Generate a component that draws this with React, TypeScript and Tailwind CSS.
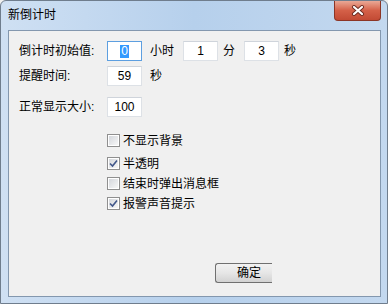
const font = "font-['Liberation_Sans','Noto_Sans_CJK_SC',sans-serif]";

const TextBox = ({ value, focused }: { value: string; focused?: boolean }) => (
  <div
    className={`w-[35px] h-[20px] bg-white flex items-center justify-center text-[12px] text-black border ${
      focused ? "border-[#5d9fe0]" : "border-[#dde1e6] border-t-[#cfd4db]"
    }`}
  >
    {focused ? <span className="bg-[#3399ff] text-white leading-[13px] px-[1px]">{value}</span> : value}
  </div>
);

const CheckBox = ({ label, checked }: { label: string; checked?: boolean }) => (
  <div className="flex items-center h-[13px]">
    <div className="w-[13px] h-[13px] border border-[#8f8f8f] bg-white p-[1px]">
      <div className="w-full h-full bg-gradient-to-br from-[#d4d7dc] to-[#f7f7f7] flex items-center justify-center">
        {checked && (
          <svg width="9" height="9" viewBox="0 0 9 9">
            <path d="M1 4.5 L3.5 7 L8 1.5" fill="none" stroke="#41578a" strokeWidth="1.6" />
          </svg>
        )}
      </div>
    </div>
    <span className="ml-[3px] text-[12px] text-black leading-none">{label}</span>
  </div>
);

export default function App() {
  return (
    <div className={`w-[388px] h-[304px] ${font} bg-[#f0f0f0]`}>
      <div className="w-full h-full rounded-t-[6px] border border-[#6f7d8d] bg-gradient-to-r from-[#cfe0f3] via-[#b6d0ec] to-[#c3d8ef] flex flex-col">
        <div className="h-[29px] flex justify-between items-start">
          <span className="ml-[7px] mt-[7px] text-[12px] text-black leading-[14px]">新倒计时</span>
          <div className="mr-[6px] w-[47px] h-[20px] rounded-b-[4px] border border-t-0 border-[#8c3526] bg-gradient-to-b from-[#e9a896] via-[#d46048] to-[#c24a34] flex items-center justify-center">
            <svg width="14" height="11" viewBox="0 0 14 11">
              <path d="M3 2 L11 9 M11 2 L3 9" stroke="#6a2a20" strokeWidth="4" strokeLinecap="round" />
              <path d="M3 2 L11 9 M11 2 L3 9" stroke="#ffffff" strokeWidth="2.2" strokeLinecap="round" />
            </svg>
          </div>
        </div>
        <div className="ml-[7px] mr-[6px] h-[267px] border border-[#8397ae] bg-[#f0f0f0] flex flex-col text-[12px] text-black">
          <div className="flex items-center mt-[10px] ml-[10px]">
            <span className="w-[88px]">倒计时初始值:</span>
            <TextBox value="0" focused />
            <span className="ml-[8px]">小时</span>
            <div className="ml-[9px]"><TextBox value="1" /></div>
            <span className="ml-[5px]">分</span>
            <div className="ml-[9px]"><TextBox value="3" /></div>
            <span className="ml-[5px]">秒</span>
          </div>
          <div className="flex items-center mt-[5px] ml-[10px]">
            <span className="w-[88px]">提醒时间:</span>
            <TextBox value="59" />
            <span className="ml-[8px]">秒</span>
          </div>
          <div className="flex items-center mt-[11px] ml-[10px]">
            <span className="w-[88px]">正常显示大小:</span>
            <TextBox value="100" />
          </div>
          <div className="flex flex-col ml-[98px] mt-[17px] gap-[7px]">
            <CheckBox label="不显示背景" />
            <div className="mt-[3px]"><CheckBox label="半透明" checked /></div>
            <CheckBox label="结束时弹出消息框" />
            <CheckBox label="报警声音提示" checked />
          </div>
          <div className="flex-1" />
          <div className="ml-[206px] mb-[13px] w-[57px] h-[20px] rounded-l-[3px] border border-r-0 border-[#707070] bg-gradient-to-b from-[#f2f2f2] via-[#e6e6e6] to-[#d2d2d2] flex items-center justify-center">
            <span className="pl-[10px]">确定</span>
          </div>
        </div>
      </div>
    </div>
  );
}
